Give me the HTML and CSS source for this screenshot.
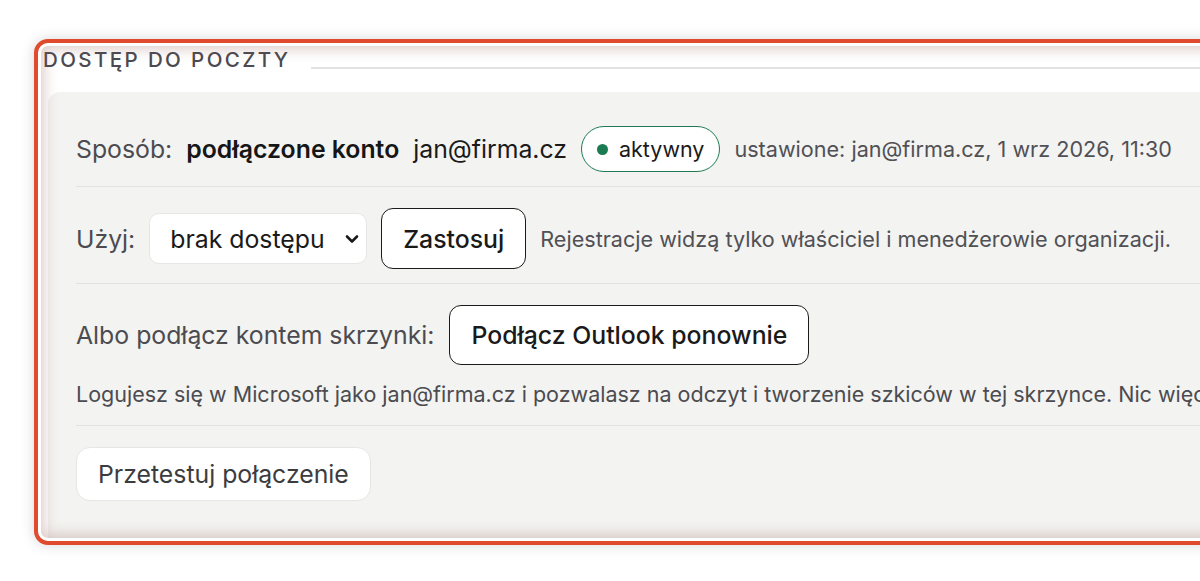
FILE: index.html
```html
<!DOCTYPE html>
<html lang="pl">
<head>
<meta charset="utf-8">
<title>Dostęp do poczty</title>
<link rel="stylesheet" href="styles.css">
</head>
<body>
<div class="page">
  <div class="frame">
    <div class="legend-row">
      <span class="legend">DOSTĘP DO POCZTY</span>
      <span class="legend-line"></span>
    </div>
    <div class="panel">
      <div class="row">
        <span class="label">Sposób:</span>
        <strong class="strong">podłączone konto</strong>
        <span class="text">jan@firma.cz</span>
        <span class="badge"><span class="dot"></span>aktywny</span>
        <span class="meta">ustawione: jan@firma.cz, 1 wrz 2026, 11:30</span>
      </div>
      <div class="row row-2">
        <span class="label">Użyj:</span>
        <span class="select-wrap">
          <select class="select"><option>brak dostępu</option></select>
          <svg class="chev" width="14" height="10" viewBox="0 0 14 10"><path d="M2 2.5 L7 7.5 L12 2.5" fill="none" stroke="#1a1a1a" stroke-width="2.6" stroke-linecap="round" stroke-linejoin="round"/></svg>
        </span>
        <button class="btn btn-dark">Zastosuj</button>
        <span class="meta">Rejestracje widzą tylko właściciel i menedżerowie organizacji.</span>
      </div>
      <div class="row row-col">
        <div class="line">
          <span class="label">Albo podłącz kontem skrzynki:</span>
          <button class="btn btn-dark btn-wide">Podłącz Outlook ponownie</button>
        </div>
        <p class="note">Logujesz się w Microsoft jako jan@firma.cz i pozwalasz na odczyt i tworzenie szkiców w tej skrzynce. Nic więcej.</p>
      </div>
      <div class="row row-4">
        <button class="btn btn-light">Przetestuj połączenie</button>
      </div>
    </div>
  </div>
</div>
</body>
</html>
```
FILE: styles.css
```css
html, body {
  margin: 0;
  padding: 0;
  background: #ffffff;
  overflow: hidden;
}
body {
  font-family: Inter, "Noto Sans", sans-serif;
  color: #1a1a1a;
  width: 1200px;
  height: 581px;
}
.page {
  padding: 39px 0 0 34px;
}
.frame {
  position: relative;
  width: 1400px;
  height: 498px;
  border: 4px solid #e04a2d;
  border-radius: 14px;
  background: #ffffff;
  overflow: hidden;
  box-shadow: 0 0 14px rgba(0, 0, 0, 0.16);
}
.frame::after {
  content: "";
  position: absolute;
  inset: 0;
  border-radius: 10px;
  pointer-events: none;
  box-shadow: inset 0 0 0 3px #ffffff, inset 0 0 14px 6px rgba(150, 95, 88, 0.32);
}
.legend-row {
  display: flex;
  align-items: flex-end;
  height: 49px;
  padding-left: 5px;
  box-sizing: border-box;
}
.legend {
  font-size: 20.5px;
  line-height: 24px;
  letter-spacing: 2.4px;
  color: #4a4a50;
  font-weight: 500;
  margin-bottom: 20px;
}
.legend-line {
  flex: 1;
  height: 2px;
  background: #e2e2e2;
  margin-left: 20px;
  margin-bottom: 23px;
}
.panel {
  margin-left: 10px;
  background: #f3f3f1;
  border-top-left-radius: 12px;
  padding: 14px 0 40px 28px;
  height: 600px;
}
.row {
  display: flex;
  align-items: center;
  gap: 14px;
  padding: 20px 0 14px;
  border-top: 1px solid #e2e2df;
  white-space: nowrap;
  font-size: 24.8px;
}
.row:first-child {
  border-top: none;
}
.row-2 {
  padding-top: 21px;
}
.row-col {
  flex-direction: column;
  align-items: flex-start;
  gap: 14px;
  padding-top: 21px;
  padding-bottom: 16px;
}
.row-4 {
  padding-top: 21px;
}
.line {
  display: flex;
  align-items: center;
  gap: 15px;
}
.label {
  color: #4b4b50;
}
.strong {
  font-weight: 600;
  color: #161616;
}
.text {
  color: #1a1a1a;
}
.badge {
  display: inline-flex;
  align-items: center;
  gap: 11px;
  height: 46px;
  box-sizing: border-box;
  padding: 0 15px;
  border: 1.5px solid #1f7a55;
  border-radius: 23px;
  background: #ffffff;
  color: #1a1a1a;
  font-size: 21.5px;
}
.dot {
  width: 11px;
  height: 11px;
  border-radius: 50%;
  background: #1a7a52;
}
.meta {
  font-size: 21.6px;
  color: #505055;
}
.select-wrap {
  position: relative;
  display: inline-block;
}
.select {
  appearance: none;
  -webkit-appearance: none;
  font-family: inherit;
  font-size: 24.8px;
  color: #1a1a1a;
  width: 218px;
  height: 51px;
  padding: 0 40px 0 20px;
  border: 1px solid #e6e6e4;
  border-radius: 10px;
  background: #ffffff;
  display: block;
}
.chev {
  position: absolute;
  right: 8px;
  top: 21px;
  pointer-events: none;
}
.btn {
  font-family: inherit;
  font-size: 24.8px;
  background: #ffffff;
  cursor: pointer;
  white-space: nowrap;
}
.btn-dark {
  height: 61px;
  padding: 0 21px;
  border: 1.5px solid #1b1b1b;
  border-radius: 12px;
  font-weight: 500;
  color: #1a1a1a;
}
.btn-wide {
  height: 60px;
}
.btn-light {
  height: 54px;
  padding: 0 21px;
  border: 1px solid #e6e6e4;
  border-radius: 14px;
  color: #3c3c40;
}
.note {
  margin: 0;
  font-size: 21.5px;
  line-height: 30px;
  color: #4b4b50;
}
```
